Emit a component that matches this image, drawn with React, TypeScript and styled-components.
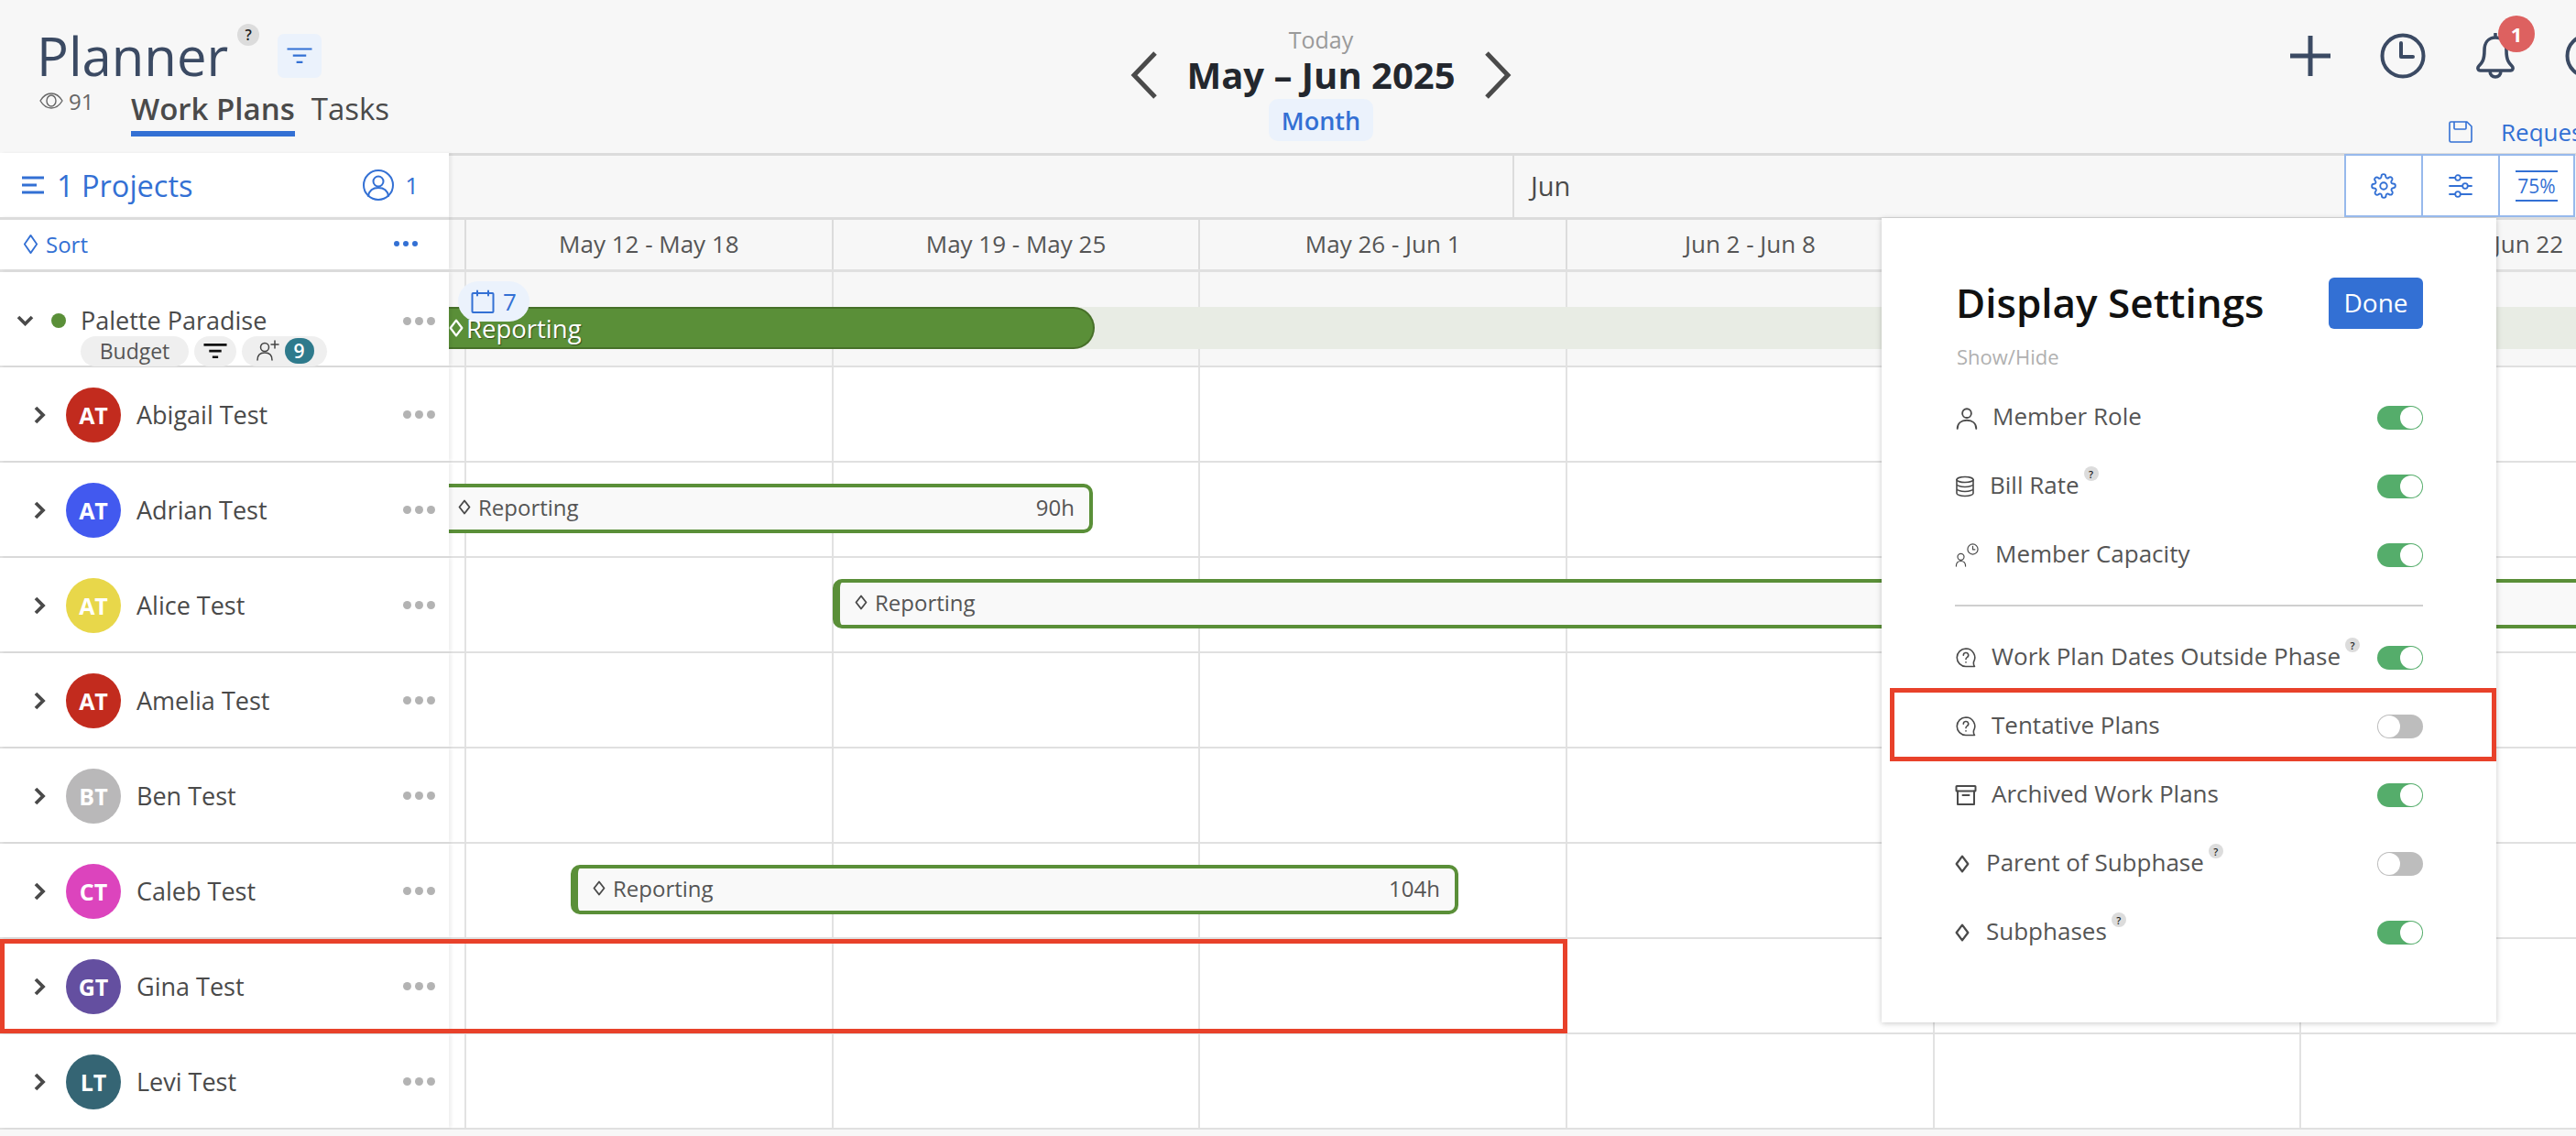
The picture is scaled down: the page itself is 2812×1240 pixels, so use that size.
import React from "react";
import styled, { createGlobalStyle } from "styled-components";

const blue = "#3370d4";
const navy = "#3b4a63";
const green = "#5a8f38";
const COL = 400.7;

const Global = createGlobalStyle`
  html, body { margin: 0; padding: 0; background: #f7f7f7; }
  body { font-family: "Open Sans", "Noto Sans", sans-serif; color: #4a4a4a; }
  #root { width: 2812px; height: 1240px; overflow: hidden; }
  * { box-sizing: border-box; }
  svg { flex: none; display: block; }
`;

const Page = styled.div`
  position: relative; width: 2812px; height: 1240px; overflow: hidden; background: #f7f7f7;
`;
const Header = styled.header`
  height: 167px; display: grid; grid-template-columns: 1132px 620px 1fr; position: relative;
`;
const TitleBlock = styled.div`
  padding: 28px 0 0 40px; display: flex; flex-direction: column;
`;
const TitleRow = styled.div`display: flex; align-items: flex-start; height: 64px;`;
const Title = styled.h1`
  margin: 1px 0 0; font-size: 58px; line-height: 64px; font-weight: 500; color: ${navy};
`;
const Help = styled.span<{ $s: number }>`
  display: inline-flex; align-items: center; justify-content: center; flex: none;
  width: ${p => p.$s}px; height: ${p => p.$s}px; border-radius: 50%; background: #dcdcdc; color: #222;
  font-size: ${p => Math.round(p.$s * 0.68)}px; font-weight: 600; line-height: 1;
`;
const TitleHelp = styled(Help)`margin: -2px 0 0 10px;`;
const FilterBtn = styled.span`
  margin: 9px 0 0 20px; width: 48px; height: 48px; border-radius: 7px; background: #ebf2fc;
  display: flex; align-items: center; justify-content: center;
`;
const SubRow = styled.div`display: flex; margin-top: 2px;`;
const Views = styled.span`
  display: flex; align-items: center; gap: 6px; width: 103px; height: 32px; font-size: 24px; color: #666; padding-left: 3px;
`;
const Tabs = styled.div`display: flex; gap: 18px; font-size: 33px; line-height: 40px;`;
const Tab = styled.span<{ $on?: boolean }>`
  font-weight: ${p => (p.$on ? 600 : 400)}; color: #4a4a4a; height: 55px; padding-top: 5px;
  border-bottom: ${p => (p.$on ? `6px solid ${blue}` : "none")};
`;
const Center = styled.div`display: flex; flex-direction: column; align-items: center; padding-top: 27px;`;
const Today = styled.div`font-size: 25px; line-height: 32px; color: #9a9a9a;`;
const DateRow = styled.div`display: flex; align-items: center; gap: 31px; height: 46px;`;
const DateText = styled.div`font-size: 40px; font-weight: 700; color: #23272e; line-height: 46px; white-space: nowrap;`;
const Month = styled.div`
  margin-top: 3px; width: 114px; height: 46px; border-radius: 10px; background: #ebf2fc; color: ${blue};
  font-size: 27px; font-weight: 600; display: flex; align-items: center; justify-content: center;
`;
const RightTools = styled.div`
  position: relative; display: flex; flex-direction: column; align-items: flex-end; padding-top: 36px; overflow: hidden;
`;
const ToolIcons = styled.div`display: flex; align-items: center; width: 312px; gap: 54px; height: 50px;`;
const BellWrap = styled.span`position: relative; display: flex;`;
const BellBadge = styled.span`
  position: absolute; left: 25px; top: -19px; width: 40px; height: 40px; border-radius: 50%;
  background: #dd6160; color: #fff; font-size: 22px; font-weight: 700;
  display: flex; align-items: center; justify-content: center;
`;
const SaveRow = styled.div`
  display: flex; align-items: center; gap: 31px; white-space: nowrap; flex: none;
  font-size: 26px; font-weight: 500; color: ${blue}; width: 139px; margin-top: 43px; height: 30px;
`;
const Row = styled.div<{ $h: number; $line?: number }>`
  display: grid; grid-template-columns: 490px 1fr; grid-template-rows: minmax(0, 1fr); height: ${p => p.$h}px; position: relative;
  border-bottom: ${p => (p.$line ? `${p.$line}px solid #e0e0e0` : "none")};
`;
const LeftCell = styled.div`
  background: #fff; display: flex; align-items: center; position: relative;
  box-shadow: 3px 0 3px rgba(0,0,0,.06);
  z-index: 2;
`;
const MemberCell = styled(LeftCell)`padding-top: 1px;`;
const ProjectsCell = styled(LeftCell)`padding: 0 33px 0 24px; justify-content: space-between;`;
const ProjectsLabel = styled.span`
  display: flex; align-items: center; gap: 14px; font-size: 32.5px; font-weight: 500; color: ${blue};
`;
const MembersLabel = styled.span`
  display: flex; align-items: center; gap: 12px; font-size: 26px; color: ${blue};
`;
const MonthStrip = styled.div`
  display: grid; grid-template-columns: 1163px 1fr; background: #f7f7f7; border-top: 3px solid #dcdcdc;
`;
const MonthCell = styled.div`border-right: 2px solid #dcdcdc;`;
const JunCell = styled.div`
  padding-left: 18px; font-size: 29px; font-weight: 500; line-height: 66px; color: #4a4a4a;
`;
const SortCell = styled(LeftCell)`
  padding: 0 19px 2px 25px; justify-content: space-between; border-top: 3px solid #dcdcdc;
`;
const SortLabel = styled.span`display: flex; align-items: center; gap: 8px; font-size: 24px; color: ${blue};`;
const WeekStrip = styled.div`
  display: flex; padding-left: 17px; background: #f7f7f7; border-top: 3px solid #dcdcdc; overflow: hidden;
`;
const Week = styled.div`
  flex: none; width: ${COL}px; border-left: 2px solid #dcdcdc; text-align: center;
  font-size: 26px; line-height: 52px; color: #555; white-space: nowrap;
`;
const Lane = styled.div<{ $tint?: boolean }>`
  position: relative; display: flex; padding-left: 17px; background: ${p => (p.$tint ? "#f7f7f7" : "#fff")}; overflow: hidden;
`;
const LaneCol = styled.div`flex: none; width: ${COL}px; border-left: 2px solid #e2e2e2;`;
const Chev = styled.span`flex: none; display: flex; width: 12px; margin-left: 37px;`;
const Avatar = styled.span<{ $c: string }>`
  flex: none; margin-left: 23px; width: 60px; height: 60px; border-radius: 50%; background: ${p => p.$c};
  color: #fff; font-weight: 700; font-size: 25px; display: flex; align-items: center; justify-content: center;
`;
const Name = styled.span`margin: -1px 0 0 17px; font-size: 27px; font-weight: 500; color: #4a4a4a; white-space: nowrap; flex: 1;`;
const Dots = styled.span`display: flex; gap: 4px; margin-right: 15px;`;
const Dot = styled.i`width: 9px; height: 9px; border-radius: 50%; background: #b3b3b3; display: block;`;
const BlueDot = styled(Dot)`width: 6px; height: 6px; background: ${blue};`;
const ProjectCell = styled(LeftCell)`display: block; padding: 37px 0 0 18px;`;
const ProjectTop = styled.div`display: flex; align-items: center; height: 32px;`;
const StatusDot = styled.span`margin-left: 19px; width: 16px; height: 16px; border-radius: 50%; background: ${green}; flex: none;`;
const ProjectName = styled.span`margin: -2px 0 0 16px; font-size: 27px; font-weight: 500; color: #4a4a4a; flex: 1; white-space: nowrap;`;
const Chips = styled.div`display: flex; gap: 6px; margin: 1px 0 0 70px;`;
const Chip = styled.span<{ $w: number }>`
  width: ${p => p.$w}px; height: 33px; border-radius: 17px; background: #efefef; font-size: 23px; color: #555;
  display: flex; align-items: center; justify-content: center; gap: 6px; flex: none; padding-bottom: 1px;
`;
const CountBadge = styled.span`
  width: 32px; height: 28px; border-radius: 14px; background: #2e7a8c; color: #fff; font-size: 21px; font-weight: 600;
  display: flex; align-items: center; justify-content: center;
`;
const Band = styled.div`
  position: absolute; left: 0; right: 0; top: 38px; height: 46px; background: #e8ece4;
`;
const Summary = styled.div`
  position: absolute; left: 0; top: 38px; width: 705px; height: 46px; background: ${green};
  border: 2px solid #477029; border-left: none; border-radius: 0 23px 23px 0; color: #fff; font-size: 27.5px; font-weight: 500;
  display: flex; align-items: center; gap: 3px; text-shadow: 1px 1px 1px rgba(0,0,0,.45);
`;
const CalBadge = styled.span`
  position: absolute; left: 10px; top: 10px; width: 78px; height: 44px; border-radius: 22px; background: #ebf2fc;
  color: ${blue}; font-size: 26px; display: flex; align-items: center; justify-content: center; gap: 9px;
`;
const Bar = styled.div<{ $open?: boolean }>`
  position: absolute; top: 23px; height: 54px; background: #f9f9f9;
  border: 4px solid ${green}; border-left-width: ${p => (p.$open ? 0 : 8)}px;
  border-radius: ${p => (p.$open ? "0 10px 10px 0" : "10px")};
  display: flex; align-items: center; justify-content: space-between;
  padding: 0 16px 3px ${p => (p.$open ? 10 : 16)}px;
  font-size: 24px; color: #555;
`;
const BarLabel = styled.span`display: flex; align-items: center; gap: 8px;`;
const Highlight = styled.div`
  position: absolute; border: 5px solid #e8412a; z-index: 6; pointer-events: none;
`;
const RowHighlight = styled(Highlight)`left: 0; top: 1025px; width: 1711px; height: 103px;`;
const PanelHighlight = styled(Highlight)`left: 2063px; top: 751px; width: 662px; height: 80px;`;
const Tools = styled.div`
  position: absolute; left: 2559px; top: 168px; width: 252px; height: 69px; display: grid; grid-template-columns: 82px 84px 82px;
  background: #fff; border: 2px solid #97b9ec; z-index: 5;
`;
const ToolBtn = styled.div`
  display: flex; align-items: center; justify-content: center; border-left: 2px solid #97b9ec;
  &:first-child { border-left: none; }
`;
const Zoom = styled.span`
  width: 46px; height: 34px; border-top: 2px solid ${blue}; border-bottom: 2px solid ${blue}; color: ${blue};
  font-size: 21px; font-weight: 500; display: flex; align-items: center; justify-content: center;
`;
const Panel = styled.aside`
  position: absolute; left: 2054px; top: 238px; width: 671px; height: 878px; background: #fff; z-index: 4;
  box-shadow: 0 1px 6px rgba(0,0,0,.22); padding: 65px 80px 0 80px;
`;
const PanelHead = styled.div`display: flex; justify-content: space-between; align-items: center; height: 56px;`;
const PanelTitle = styled.h2`margin: -2px 0 0 1px; font-size: 44px; font-weight: 600; color: #111; line-height: 56px; white-space: nowrap;`;
const Done = styled.span`
  width: 103px; height: 56px; border-radius: 6px; background: ${blue}; color: #fff; font-size: 28px; font-weight: 500;
  display: flex; align-items: center; justify-content: center; padding-bottom: 2px;
`;
const ShowHide = styled.div`margin: 15px 0 0 2px; font-size: 22px; line-height: 30px; color: #b0b0b0;`;
const Setting = styled.div`
  height: 75px; display: flex; align-items: center; font-size: 26px; color: #555; white-space: nowrap;
`;
const SettingList = styled.div`margin-top: 14px;`;
const IconSlot = styled.span<{ $w: number }>`
  flex: none; width: ${p => p.$w}px; display: flex; align-items: center;
`;
const SettingLabel = styled.span`flex: 1; display: flex; align-items: flex-start; gap: 5px; margin-top: -3px;`;
const SmallHelp = styled(Help)`margin-top: -2px;`;
const Toggle = styled.span<{ $on: boolean }>`
  flex: none; position: relative; width: 50px; height: 26px; border-radius: 13px; background: ${p => (p.$on ? "#55ad6b" : "#bdbdbd")};
  &::after {
    content: ""; position: absolute; top: 1px; left: ${p => (p.$on ? "25px" : "1px")}; width: 24px; height: 24px; border-radius: 50%; background: #fff;
  }
`;
const Divider = styled.div`height: 2px; background: #cfcfcf; margin: 17px 0 18px;`;

const S = ({ c = "#4a4a4a", w = 2, size, vb = "0 0 24 24", children, h }: any) => (
  <svg width={size} height={h ?? size} viewBox={vb} fill="none" stroke={c} strokeWidth={w} strokeLinecap="round" strokeLinejoin="round">{children}</svg>
);
const Diamond = ({ c = "#4a4a4a", s = 14, h, w = 2 }: any) => (
  <svg width={s} height={h ?? s + 4} viewBox="0 0 14 18" fill="none" stroke={c} strokeWidth={w} preserveAspectRatio="none"><path d="M7 1.500 12.500 9 7 16.500 1.500 9Z" strokeLinejoin="round" /></svg>
);
const FilterIcon = ({ c, s = 28, w = 2.2 }: any) => (
  <svg width={s} height={s * 0.62} viewBox="0 0 28 18" fill="none" stroke={c} strokeWidth={w}><path d="M0 1.500h28M6.500 9h15M10.500 16.500h7" /></svg>
);
const ChevR = () => (
  <svg width="13" height="20" viewBox="0 0 13 20" fill="none" stroke="#4a4a4a" strokeWidth="3.800"><path d="M2 2l8 8-8 8" /></svg>
);
const Bubble = () => (
  <S size={24} w={1.6}><path d="M12 2A9.750 9.750 0 0 0 12 21.500H21.500C20.600 20.500 20.200 18.500 20.500 16.500A9.750 9.750 0 0 0 12 2Z" /><path d="M9.300 9.200a2.700 2.700 0 1 1 3.900 2.400c-.8.500-1.200 1-1.200 2" /><path d="M12 16.800v.2" /></S>
);
const Person = () => (
  <S size={26} w={1.7}><circle cx="12" cy="7.500" r="4.500" /><path d="M2.500 23c0-5.500 4-8.500 9.500-8.500s9.500 3 9.500 8.500" /></S>
);
const Db = () => (
  <S size={24} w={1.6}><ellipse cx="11" cy="4.500" rx="9" ry="3" /><path d="M2 4.500v15c0 1.600 4 3 9 3s9-1.400 9-3v-15M2 9.500c0 1.600 4 3 9 3s9-1.400 9-3M2 14.500c0 1.600 4 3 9 3s9-1.400 9-3" /></S>
);
const Cap = () => (
  <S size={26} vb="0 0 28 28" w={1.3}><circle cx="21" cy="7" r="6" /><path d="M21 3.500v3.800h2.600" /><circle cx="7" cy="16" r="3.800" /><path d="M1.500 27c0-3.800 2.200-6 5.500-6s5.500 2.200 5.500 6" /></S>
);
const Archive = () => (
  <S size={24} w={2}><rect x="1.500" y="2" width="21" height="5.500" rx=".6" /><path d="M3 7.500V22h18V7.500M8.500 12h7" /></S>
);

const people: [string, string, string][] = [
  ["AT", "#c22b1e", "Abigail Test"],
  ["AT", "#4259ef", "Adrian Test"],
  ["AT", "#e8d74a", "Alice Test"],
  ["AT", "#c22b1e", "Amelia Test"],
  ["BT", "#b9b8b9", "Ben Test"],
  ["CT", "#dc44bd", "Caleb Test"],
  ["GT", "#644fa0", "Gina Test"],
  ["LT", "#356574", "Levi Test"],
];
const weeks = ["May 12 - May 18", "May 19 - May 25", "May 26 - Jun 1", "Jun 2 - Jun 8", "Jun 9 - Jun 15", "Jun 16 - Jun 22"];

const More = () => (<Dots><Dot /><Dot /><Dot /></Dots>);
const LaneCols = () => (<>{weeks.map(w => <LaneCol key={w} />)}</>);
const BarRow = ({ left, width, open, hours }: { left: number; width: number; open?: boolean; hours?: string }) => (
  <Bar $open={open} style={{ left, width }}>
    <BarLabel><Diamond s={14} h={17} w={1.800} />Reporting</BarLabel>
    {hours && <span>{hours}</span>}
  </Bar>
);
const bars: Record<string, { left: number; width: number; open?: boolean; hours?: string }> = {
  "Adrian Test": { left: 0, width: 703, open: true, hours: "90h" },
  "Alice Test": { left: 419, width: 2400 },
  "Caleb Test": { left: 133, width: 969, hours: "104h" },
};

type Item = [React.ReactNode, number, string, boolean, boolean];
const settingsA: Item[] = [
  [<Person />, 41, "Member Role", false, true],
  [<Db />, 38, "Bill Rate", true, true],
  [<Cap />, 44, "Member Capacity", false, true],
];
const settingsB: Item[] = [
  [<Bubble />, 40, "Work Plan Dates Outside Phase", true, true],
  [<Bubble />, 40, "Tentative Plans", false, false],
  [<Archive />, 40, "Archived Work Plans", false, true],
  [<Diamond s={16} h={20} />, 34, "Parent of Subphase", true, false],
  [<Diamond s={16} h={20} />, 34, "Subphases", true, true],
];
const SettingRow = ({ item }: { item: Item }) => (
  <Setting>
    <IconSlot $w={item[1]}>{item[0]}</IconSlot>
    <SettingLabel>{item[2]}{item[3] && <SmallHelp $s={16}>?</SmallHelp>}</SettingLabel>
    <Toggle $on={item[4]} />
  </Setting>
);

export default function App() {
  return (
    <Page>
      <Global />
      <Header>
        <TitleBlock>
          <TitleRow>
            <Title>Planner</Title>
            <TitleHelp $s={24}>?</TitleHelp>
            <FilterBtn><FilterIcon c={blue} /></FilterBtn>
          </TitleRow>
          <SubRow>
            <Views>
              <S size={26} h={18} vb="0 0 26 18" c="#666" w={1.400}><path d="M1 9c3-5 7-8 12-8s9 3 12 8c-3 5-7 8-12 8S4 14 1 9Z" /><ellipse cx="13" cy="9" rx="5" ry="6" /></S>
              91
            </Views>
            <Tabs><Tab $on>Work Plans</Tab><Tab>Tasks</Tab></Tabs>
          </SubRow>
        </TitleBlock>
        <Center>
          <Today>Today</Today>
          <DateRow>
            <svg width="30" height="52" viewBox="0 0 30 52" fill="none" stroke="#4a4a4a" strokeWidth="5"><path d="M27 2 4 26l23 24" /></svg>
            <DateText>May – Jun 2025</DateText>
            <svg width="30" height="52" viewBox="0 0 30 52" fill="none" stroke="#4a4a4a" strokeWidth="5"><path d="M3 2l23 24L3 50" /></svg>
          </DateRow>
          <Month>Month</Month>
        </Center>
        <RightTools>
          <ToolIcons>
            <S size={44} vb="0 0 44 44" c={navy} w={5}><path d="M22 0v44M0 22h44" strokeLinecap="butt" /></S>
            <S size={50} vb="0 0 50 50" c={navy} w={4}><circle cx="25" cy="25" r="22.500" /><path d="M23 11v15h13" /></S>
            <BellWrap>
              <S size={44} vb="0 0 44 50" h={50} c={navy} w={3.600}><path d="M22 5c-8 0-12 6-12 14 0 11-3 14-6 17-2 2-1 5 1.500 5h33c2.500 0 3.500-3 1.500-5-3-3-6-6-6-17 0-8-4-14-12-14ZM22 1v4M16 41c0 5 3 7 6 7s6-2 6-7" /></S>
              <BellBadge>1</BellBadge>
            </BellWrap>
            <S size={50} vb="0 0 50 50" c={navy} w={4}><circle cx="25" cy="25" r="22.500" /></S>
          </ToolIcons>
          <SaveRow>
            <S size={26} h={24} vb="0 0 26 24" c={blue} w={1.600}><path d="M1 2.500A1.500 1.500 0 0 1 2.500 1H20l5 5v15.500a1.500 1.500 0 0 1-1.500 1.500h-21A1.500 1.500 0 0 1 1 21.500ZM6 1v7a1 1 0 0 0 1 1h11a1 1 0 0 0 1-1V1" /></S>
            <span>Request</span>
          </SaveRow>
        </RightTools>
      </Header>

      <Row $h={70}>
        <ProjectsCell>
          <ProjectsLabel>
            <svg width="24" height="20" viewBox="0 0 24 20" fill="none" stroke={blue} strokeWidth="3"><path d="M0 2h24M0 10h16M0 18h24" /></svg>
            1 Projects
          </ProjectsLabel>
          <MembersLabel>
            <S size={34} vb="0 0 34 34" c={blue} w={2}><circle cx="17" cy="17" r="16" /><circle cx="17" cy="13" r="5.500" /><path d="M6 29c1-6 5-9 11-9s10 3 11 9" /></S>
            1
          </MembersLabel>
        </ProjectsCell>
        <MonthStrip><MonthCell /><JunCell>Jun</JunCell></MonthStrip>
      </Row>
      <Row $h={60} $line={3}>
        <SortCell>
          <SortLabel><Diamond c={blue} s={17} h={23} w={1.500} />Sort</SortLabel>
          <Dots><BlueDot /><BlueDot /><BlueDot /></Dots>
        </SortCell>
        <WeekStrip>{weeks.map(w => <Week key={w}>{w}</Week>)}</WeekStrip>
      </Row>
      <Row $h={104} $line={2}>
        <ProjectCell>
          <ProjectTop>
            <svg width="19" height="12" viewBox="0 0 19 12" fill="none" stroke="#4a4a4a" strokeWidth="3.600"><path d="M2 2l7.500 7.500L17 2" /></svg>
            <StatusDot />
            <ProjectName>Palette Paradise</ProjectName>
            <More />
          </ProjectTop>
          <Chips>
            <Chip $w={118}>Budget</Chip>
            <Chip $w={46}><FilterIcon c="#111" s={26} w={3} /></Chip>
            <Chip $w={93}>
              <S size={26} vb="0 0 26 24" h={24} c="#444" w={1.500}><circle cx="10" cy="8" r="4.500" /><path d="M2 22c0-5 3-8 8-8s8 3 8 8M21 1v8M17 5h8" /></S>
              <CountBadge>9</CountBadge>
            </Chip>
          </Chips>
        </ProjectCell>
        <Lane $tint>
          <LaneCols />
          <Band />
          <Summary><Diamond c="#fff" s={16} h={20} />Reporting</Summary>
          <CalBadge>
            <S size={26} vb="0 0 26 26" c={blue} w={2}><rect x="1.500" y="4" width="23" height="21" rx="1" /><path d="M7 1.500v5M19 1.500v5M7 4h12" /></S>
            7
          </CalBadge>
        </Lane>
      </Row>
      {people.map(([ini, color, name]) => (
        <Row $h={104} $line={2} key={name}>
          <MemberCell>
            <Chev><ChevR /></Chev>
            <Avatar $c={color}>{ini}</Avatar>
            <Name>{name}</Name>
            <More />
          </MemberCell>
          <Lane>
            <LaneCols />
            {bars[name] && <BarRow {...bars[name]} />}
          </Lane>
        </Row>
      ))}

      <Tools>
        <ToolBtn>
          <S size={28} c={blue} w={1.600}><circle cx="12" cy="12" r="3.200" /><path d="M19.400 15a1.650 1.650 0 0 0 .33 1.820l.06.06a2 2 0 1 1-2.830 2.830l-.06-.06a1.650 1.650 0 0 0-2.700 1.170V21a2 2 0 0 1-4 0v-.09a1.650 1.650 0 0 0-2.800-1.170l-.06.06a2 2 0 1 1-2.830-2.830l.06-.06a1.650 1.650 0 0 0-1.170-2.800H3a2 2 0 0 1 0-4h.09a1.650 1.650 0 0 0 1.170-2.800l-.06-.06a2 2 0 1 1 2.830-2.830l.06.06a1.650 1.650 0 0 0 2.800-1.170V3a2 2 0 0 1 4 0v.09a1.650 1.650 0 0 0 2.800 1.170l.06-.06a2 2 0 1 1 2.830 2.830l-.06.06a1.650 1.650 0 0 0 1.170 2.800H21a2 2 0 0 1 0 4h-.09a1.650 1.650 0 0 0-1.510 1Z" /></S>
        </ToolBtn>
        <ToolBtn>
          <S size={26} vb="0 0 26 26" c={blue} w={1.800}><path d="M1 4h6M13 4h12M1 13h14M21 13h4M1 22h6M13 22h12" /><circle cx="10" cy="4" r="2.800" /><circle cx="18" cy="13" r="2.800" /><circle cx="10" cy="22" r="2.800" /></S>
        </ToolBtn>
        <ToolBtn><Zoom>75%</Zoom></ToolBtn>
      </Tools>

      <Panel>
        <PanelHead><PanelTitle>Display Settings</PanelTitle><Done>Done</Done></PanelHead>
        <ShowHide>Show/Hide</ShowHide>
        <SettingList>
          {settingsA.map(s => <SettingRow key={s[2]} item={s} />)}
          <Divider />
          {settingsB.map(s => <SettingRow key={s[2]} item={s} />)}
        </SettingList>
      </Panel>

      <RowHighlight />
      <PanelHighlight />
    </Page>
  );
}
